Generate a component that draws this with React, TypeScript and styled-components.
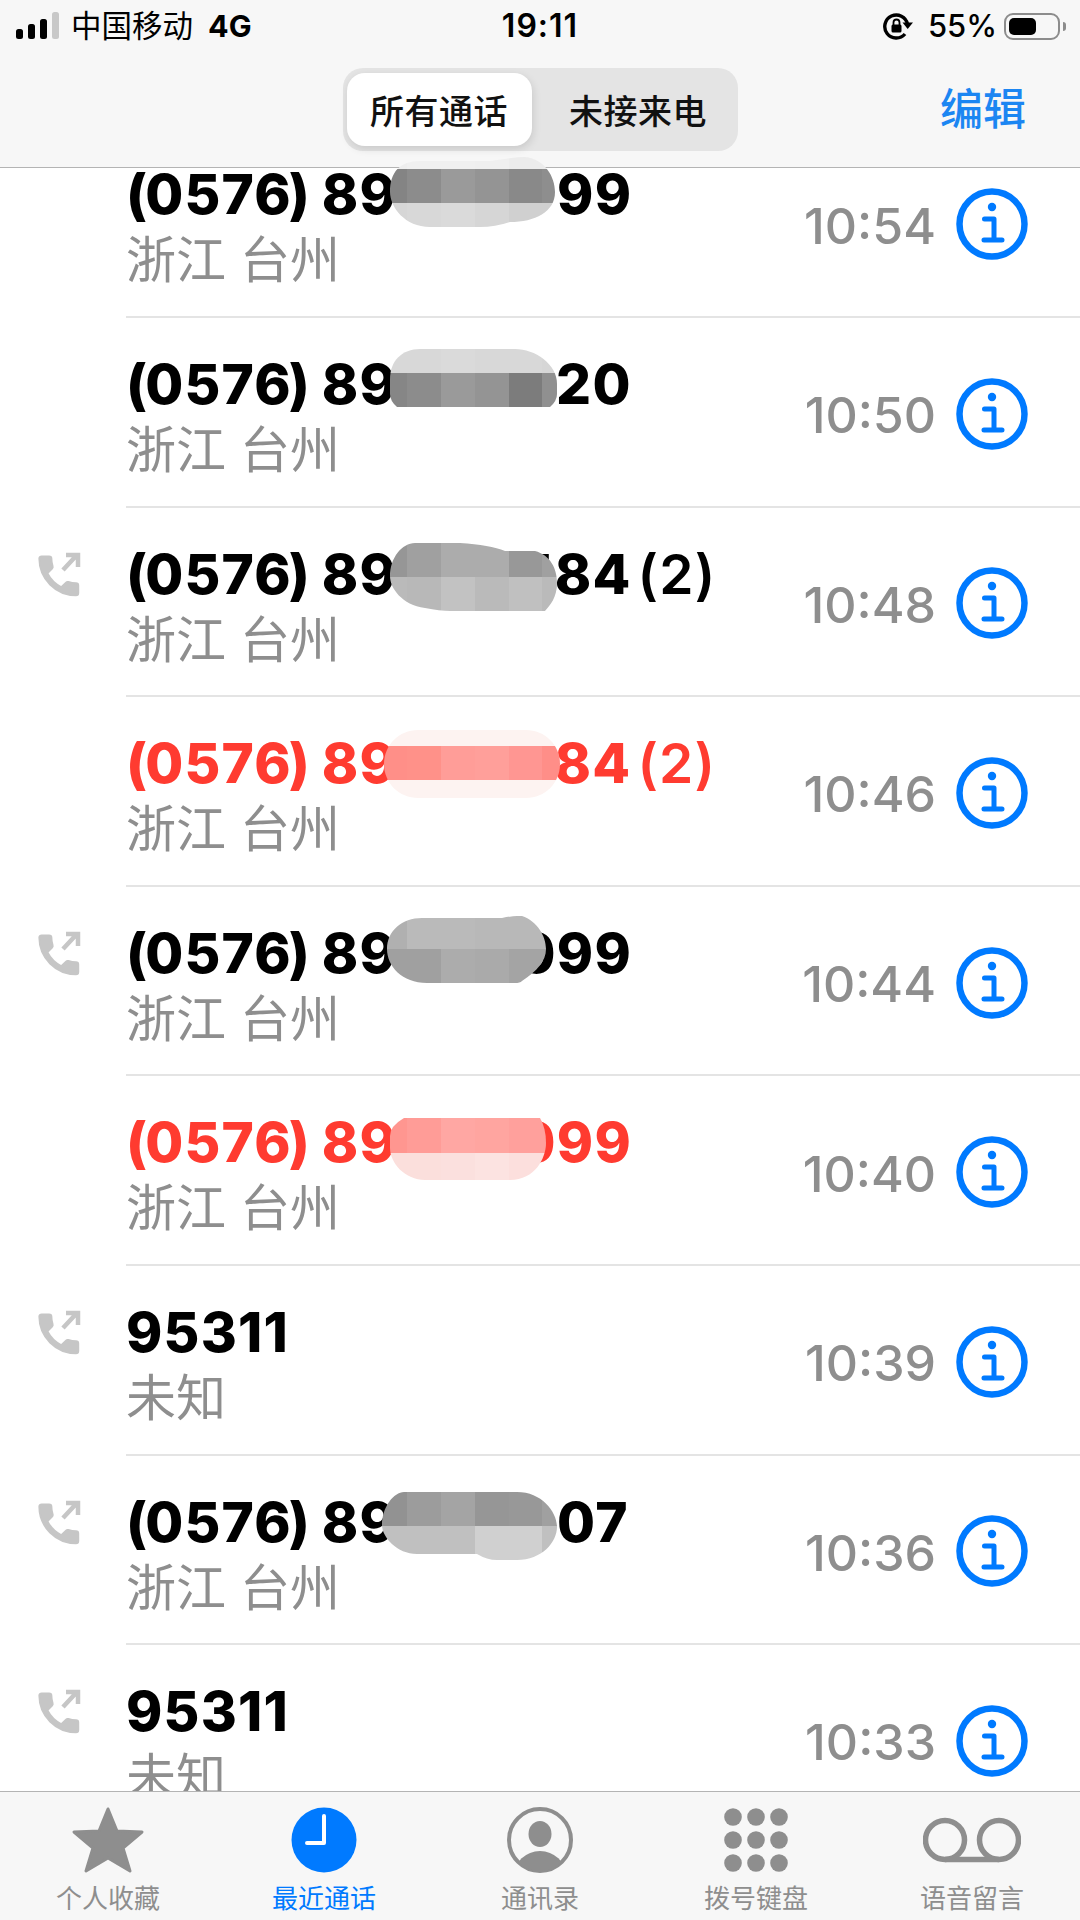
import { FC } from "react";
import styled, { createGlobalStyle } from "styled-components";

const ROW_HEIGHT = 189.6;
const FIRST_ROW_TOP = 128.4;
// column edges of the mosaic, in page pixels
const MOSAIC_EDGES = [370, 407, 441, 475, 509, 542, 580];

type Band = { y: number; h: number; colors: string[] };
type Mosaic = { x: number; y: number; w: number; h: number; d: string; bands: Band[] };
type Call = {
  area?: string;
  lead: string;
  gap?: number;
  tail?: string;
  count?: string;
  place: string;
  time: string;
  outgoing?: boolean;
  missed?: boolean;
  mosaic?: Mosaic;
};

const grey = (...values: number[]) => values.map((v) => `rgb(${v},${v},${v})`);

const calls: Call[] = [
  {
    area: "0576",
    lead: "89",
    gap: 160,
    tail: "99",
    place: "浙江 台州",
    time: "10:54",
    mosaic: {
      x: 390,
      y: 157,
      w: 165,
      h: 70,
      d: "M30 4H100Q125 0 135 0C155 2 165 20 165 35C165 55 145 65 120 65Q105 70 90 70H40C15 70 0 50 0 35C0 15 10 4 30 4Z",
      bands: [
        { y: 0, h: 12, colors: grey(238, 240, 240, 239, 236, 236) },
        { y: 12, h: 34, colors: grey(132, 140, 154, 148, 137, 142) },
        { y: 46, h: 24, colors: grey(214, 216, 218, 214, 208, 208) },
      ],
    },
  },
  {
    area: "0576",
    lead: "89",
    gap: 159,
    tail: "20",
    place: "浙江 台州",
    time: "10:50",
    mosaic: {
      x: 390,
      y: 349,
      w: 167,
      h: 58,
      d: "M30 0H125C145 0 167 15 167 35V45Q167 52 160 58H7Q0 52 0 45V30C0 12 12 0 30 0Z",
      bands: [
        { y: 0, h: 24, colors: grey(216, 216, 218, 216, 216, 214) },
        { y: 24, h: 34, colors: grey(134, 140, 154, 148, 124, 144) },
      ],
    },
  },
  {
    area: "0576",
    lead: "89",
    gap: 120.5,
    tail: "584",
    count: "(2)",
    place: "浙江 台州",
    time: "10:48",
    outgoing: true,
    mosaic: {
      x: 390,
      y: 543,
      w: 167,
      h: 68,
      d: "M25 0H70Q100 2 115 8H145C160 12 167 25 167 40C167 55 160 62 155 68H60Q50 68 35 65C12 62 0 45 0 33C0 15 12 0 25 0Z",
      bands: [
        { y: 0, h: 34, colors: grey(150, 160, 172, 172, 152, 160) },
        { y: 34, h: 34, colors: grey(186, 184, 194, 186, 192, 186) },
      ],
    },
  },
  {
    area: "0576",
    lead: "89",
    gap: 157.5,
    tail: "84",
    count: "(2)",
    place: "浙江 台州",
    time: "10:46",
    missed: true,
    mosaic: {
      x: 384,
      y: 730,
      w: 176,
      h: 68,
      d: "M34 0H142C161 0 176 15 176 34C176 53 161 68 142 68H34C15 68 0 53 0 34C0 15 15 0 34 0Z",
      bands: [
        { y: 0, h: 16, colors: Array(6).fill("#fdf3f1") },
        { y: 16, h: 34, colors: ["#ff8f88", "#ff9189", "#ff9d98", "#ff9f9a", "#ff9692", "#ff8e88"] },
        { y: 50, h: 18, colors: Array(6).fill("#fdf3f1") },
      ],
    },
  },
  {
    area: "0576",
    lead: "89",
    gap: 120.5,
    tail: "099",
    place: "浙江 台州",
    time: "10:44",
    outgoing: true,
    mosaic: {
      x: 387,
      y: 916,
      w: 159,
      h: 67,
      d: "M35 2H115Q125 0 130 0H135C150 5 159 20 159 33C159 45 150 55 135 65Q133 67 128 67H40C15 67 0 50 0 33C0 15 15 2 35 2Z",
      bands: [
        { y: 0, h: 33, colors: grey(176, 186, 186, 184, 184, 184) },
        { y: 33, h: 34, colors: grey(160, 160, 172, 170, 164, 164) },
      ],
    },
  },
  {
    area: "0576",
    lead: "89",
    gap: 120.5,
    tail: "099",
    place: "浙江 台州",
    time: "10:40",
    missed: true,
    mosaic: {
      x: 390,
      y: 1118,
      w: 156,
      h: 62,
      d: "M14 0H150Q156 10 156 25C156 40 145 62 120 62H35C15 62 0 45 0 30V18Q0 8 14 0Z",
      bands: [
        { y: 0, h: 35, colors: ["#ff9690", "#ff9c97", "#ffa7a3", "#ffa5a0", "#ffa09c", "#ffa09c"] },
        { y: 35, h: 27, colors: ["#fbdfdc", "#fbdfdc", "#fbe0de", "#fce3e1", "#fcdfdd", "#fcdfdd"] },
      ],
    },
  },
  { lead: "95311", place: "未知", time: "10:39", outgoing: true },
  {
    area: "0576",
    lead: "89",
    gap: 160,
    tail: "07",
    place: "浙江 台州",
    time: "10:36",
    outgoing: true,
    mosaic: {
      x: 382,
      y: 1492,
      w: 175,
      h: 68,
      d: "M22 0H135C160 0 175 20 175 35C175 50 160 68 135 68H115Q105 68 95 62H35C15 62 0 45 0 33C0 15 12 0 22 0Z",
      bands: [
        { y: 0, h: 34, colors: grey(146, 156, 164, 150, 152, 160) },
        { y: 34, h: 34, colors: grey(192, 192, 192, 208, 208, 192) },
      ],
    },
  },
  { lead: "95311", place: "未知", time: "10:33", outgoing: true },
];

const GlobalStyle = createGlobalStyle`
  html, body {
    margin: 0;
    padding: 0;
    background: #ffffff;
  }
`;

const Page = styled.div`
  display: flex;
  flex-direction: column;
  height: 1920px;
  width: 1080px;
  overflow: hidden;
  background: #ffffff;
  font-family: Inter, "Noto Sans CJK SC", sans-serif;
`;

const Header = styled.header`
  position: relative;
  z-index: 2;
  flex: none;
  height: 168px;
  box-sizing: border-box;
  background: #f7f7f7;
  border-bottom: 1px solid #b4b4b4;
`;

const StatusBar = styled.div`
  display: grid;
  grid-template-columns: 1fr auto 1fr;
  align-items: center;
  height: 52px;
  color: #000000;
`;

const StatusLeft = styled.div`
  display: flex;
  align-items: center;
  padding-left: 16px;
`;

const StatusRight = styled.div`
  display: flex;
  align-items: center;
  justify-content: flex-end;
  padding-right: 20px;
`;

const Signal = styled.div`
  display: flex;
  align-items: flex-end;
  gap: 5px;
  height: 28px;
  margin-top: -2px;
`;

const SignalBar = styled.span<{ $h: number; $off?: boolean }>`
  width: 7px;
  height: ${(p) => p.$h}px;
  border-radius: 2.5px;
  background: ${(p) => (p.$off ? "#c8c8c8" : "#000000")};
`;

const Carrier = styled.span`
  margin-left: 12px;
  font-size: 30.5px;
  line-height: 40px;
  font-weight: 400;
`;

const Network = styled.span`
  margin-left: 15px;
  font-size: 30.5px;
  line-height: 40px;
  font-weight: 700;
`;

const Clock = styled.span`
  font-size: 32px;
  line-height: 40px;
  font-weight: 600;
  letter-spacing: 1px;
`;

const Percent = styled.span`
  margin: 0 7px 0 15px;
  font-size: 31px;
  line-height: 40px;
  font-weight: 500;
`;

const Battery = styled.div`
  position: relative;
  width: 56px;
  height: 27px;
  box-sizing: border-box;
  padding: 3px;
  border: 2px solid #8c8c8c;
  border-radius: 9px;

  &::after {
    content: "";
    position: absolute;
    top: 7px;
    right: -8px;
    width: 3px;
    height: 9px;
    border-radius: 0 3px 3px 0;
    background: #8c8c8c;
  }
`;

const BatteryLevel = styled.div`
  width: 27px;
  height: 100%;
  border-radius: 5px;
  background: #000000;
`;

const NavBar = styled.nav`
  display: grid;
  grid-template-columns: 1fr auto 1fr;
  align-items: center;
  height: 114px;
`;

const Segments = styled.div`
  grid-column: 2;
  display: flex;
  align-items: center;
  width: 395px;
  height: 83px;
  box-sizing: border-box;
  padding: 0 5px 0 4px;
  background: #e4e4e4;
  border-radius: 20px;
`;

const Segment = styled.button<{ $active?: boolean }>`
  flex: ${(p) => (p.$active ? "0 0 185px" : "1")};
  height: 73px;
  padding: ${(p) => (p.$active ? "0" : "0 0 0 12px")};
  border: 0;
  border-radius: 18px;
  background: ${(p) => (p.$active ? "#ffffff" : "transparent")};
  box-shadow: ${(p) => (p.$active ? "1px 3px 8px rgba(0, 0, 0, 0.12)" : "none")};
  color: #111111;
  font-family: inherit;
  font-size: 34px;
  font-weight: 500;
  letter-spacing: 0.5px;
`;

const EditButton = styled.a`
  justify-self: end;
  padding-right: 54px;
  color: #1c86f2;
  font-size: 43px;
  font-weight: 500;
  line-height: 50px;
`;

const CallList = styled.main`
  flex: 1;
  min-height: 0;
  margin-top: -39.6px;
`;

const Row = styled.div`
  position: relative;
  display: flex;
  height: ${ROW_HEIGHT}px;
`;

const CallSlot = styled.div`
  flex: none;
  width: 126px;
  box-sizing: border-box;
  padding: 44px 0 0 37px;
`;

const RowBody = styled.div`
  flex: 1;
  display: flex;
  align-items: center;
  box-sizing: border-box;
  padding: 4px 52px 0 0;
  border-bottom: 2px solid #e4e4e4;
`;

const RowText = styled.div`
  flex: 1;
  align-self: flex-start;
  padding-top: 28px;
`;

const NumberLine = styled.div<{ $missed?: boolean }>`
  color: ${(p) => (p.$missed ? "#ff3b30" : "#000000")};
  font-size: 55px;
  font-weight: 800;
  letter-spacing: 1.2px;
  word-spacing: -2.5px;
  line-height: 69px;
  white-space: nowrap;
`;

const OpenParen = styled.span`
  margin-right: -3px;
`;

const CloseParen = styled.span`
  margin-left: -3px;
`;

const HiddenDigits = styled.span<{ $w: number }>`
  display: inline-block;
  width: ${(p) => p.$w}px;
`;

const Count = styled.span`
  margin-left: 6px;
  font-weight: 600;
`;

const Place = styled.div`
  color: #8e8e8e;
  font-size: 50px;
  font-weight: 400;
  line-height: 62px;
`;

const Time = styled.span`
  color: #8e8e8e;
  font-size: 50px;
  font-weight: 500;
  line-height: 60px;
  margin: 3px 20px 0 0;
`;

const MosaicShape = styled.svg<{ $left: number; $top: number }>`
  position: absolute;
  z-index: 3;
  left: ${(p) => p.$left}px;
  top: ${(p) => p.$top}px;
`;

const TabBar = styled.footer`
  position: relative;
  z-index: 2;
  flex: none;
  display: grid;
  grid-template-columns: repeat(5, 1fr);
  height: 129px;
  box-sizing: border-box;
  padding-top: 13px;
  background: #f7f7f7;
  border-top: 1px solid #b4b4b4;
`;

const Tab = styled.div<{ $active?: boolean }>`
  display: flex;
  flex-direction: column;
  align-items: center;
  color: ${(p) => (p.$active ? "#007aff" : "#8e8e8e")};
`;

const TabIcon = styled.div`
  display: flex;
  align-items: center;
  justify-content: center;
  height: 70px;
`;

const TabLabel = styled.span`
  margin-top: 9px;
  font-size: 26px;
  line-height: 30px;
`;

const OutgoingIcon: FC = () => (
  <svg width="45" height="45" viewBox="0 0 45 45">
    <g transform="translate(-4 -2) scale(2.15)" fill="#c6c6c6" stroke="#c6c6c6" strokeLinejoin="round" strokeWidth="1">
      <path d="M6.62 10.79c1.44 2.83 3.76 5.14 6.59 6.59l2.2-2.2c.27-.27.67-.36 1.02-.24 1.12.37 2.33.57 3.57.57.55 0 1 .45 1 1V20c0 .55-.45 1-1 1-9.39 0-17-7.61-17-17 0-.55.45-1 1-1h3.5c.55 0 1 .45 1 1 0 1.25.2 2.45.57 3.57.11.35.03.74-.25 1.02l-2.2 2.2z" />
    </g>
    <path d="M26 18L39 4M29 3H41V15" fill="none" stroke="#c6c6c6" strokeWidth="4.5" />
  </svg>
);

const InfoIcon: FC = () => (
  <svg width="72" height="72" viewBox="-36 -36 72 72">
    <circle r="32.5" fill="none" stroke="#007aff" strokeWidth="6.5" />
    <circle cy="-17" r="4.2" fill="#007aff" />
    <path
      d="M-7.5 -5H2V16M-8 16H10"
      fill="none"
      stroke="#007aff"
      strokeLinecap="round"
      strokeLinejoin="round"
      strokeWidth="5"
    />
  </svg>
);

const RotationLockIcon: FC = () => (
  <svg width="30" height="28" viewBox="0 0 30 28">
    <path
      d="M22 22A11.5 11.5 0 1 1 24.5 12"
      fill="none"
      stroke="#000000"
      strokeWidth="3.4"
    />
    <path d="M19.5 10.5H30L24.7 17Z" fill="#000000" />
    <rect x="8.5" y="12.5" width="10" height="8" rx="1.5" fill="#000000" />
    <path d="M10.5 13V10.5a3 3 0 0 1 6 0V13" fill="none" stroke="#000000" strokeWidth="1.8" />
  </svg>
);

const StarIcon: FC = () => (
  <svg width="74" height="68" viewBox="0 0 74 68">
    <path
      d="M37 3L46 25L71 26L52 42L59 65L37 52L15 65L22 42L3 26L28 25Z"
      fill="currentColor"
      stroke="currentColor"
      strokeLinejoin="round"
      strokeWidth="3"
    />
  </svg>
);

const RecentsIcon: FC = () => (
  <svg width="66" height="66" viewBox="-33 -33 66 66">
    <circle r="32.5" fill="currentColor" />
    <path d="M0 -24V3H-17" fill="none" stroke="#ffffff" strokeLinecap="round" strokeLinejoin="round" strokeWidth="4" />
  </svg>
);

const ContactIcon: FC = () => (
  <svg width="66" height="66" viewBox="-33 -33 66 66">
    <defs>
      <clipPath id="contact-ring">
        <circle r="31" />
      </clipPath>
    </defs>
    <circle r="31" fill="none" stroke="currentColor" strokeWidth="4" />
    <ellipse cy="-6" rx="11.5" ry="13" fill="currentColor" />
    <ellipse cy="36" rx="26" ry="25" fill="currentColor" clipPath="url(#contact-ring)" />
  </svg>
);

const KeypadIcon: FC = () => (
  <svg width="66" height="66" viewBox="-33 -33 66 66">
    {[-23, 0, 23].map((cy) =>
      [-23, 0, 23].map((cx) => (
        <circle key={`${cx}-${cy}`} cx={cx} cy={cy} r="8.8" fill="currentColor" />
      )),
    )}
  </svg>
);

const VoicemailIcon: FC = () => (
  <svg width="98" height="46" viewBox="0 0 98 46">
    <circle cx="22" cy="23" r="19.5" fill="none" stroke="currentColor" strokeWidth="5.5" />
    <circle cx="76" cy="23" r="19.5" fill="none" stroke="currentColor" strokeWidth="5.5" />
    <path d="M22 42.5H76" stroke="currentColor" strokeWidth="5.5" />
  </svg>
);

const MosaicPatch: FC<{ mosaic: Mosaic; index: number }> = ({ mosaic, index }) => (
  <MosaicShape
    $left={mosaic.x}
    $top={mosaic.y - (FIRST_ROW_TOP + ROW_HEIGHT * index)}
    width={mosaic.w}
    height={mosaic.h}
    viewBox={`0 0 ${mosaic.w} ${mosaic.h}`}
  >
    <defs>
      <clipPath id={`mosaic-${index}`}>
        <path d={mosaic.d} />
      </clipPath>
    </defs>
    <g clipPath={`url(#mosaic-${index})`}>
      {mosaic.bands.map((band) =>
        band.colors.map((color, col) => (
          <rect
            key={`${band.y}-${col}`}
            x={MOSAIC_EDGES[col] - mosaic.x}
            y={band.y}
            width={MOSAIC_EDGES[col + 1] - MOSAIC_EDGES[col]}
            height={band.h}
            fill={color}
          />
        )),
      )}
    </g>
  </MosaicShape>
);

const App: FC = () => {
  return (
    <Page>
      <GlobalStyle />
      <Header>
        <StatusBar>
          <StatusLeft>
            <Signal>
              <SignalBar $h={10} />
              <SignalBar $h={15} />
              <SignalBar $h={20} />
              <SignalBar $h={27} $off />
            </Signal>
            <Carrier>中国移动</Carrier>
            <Network>4G</Network>
          </StatusLeft>
          <Clock>19:11</Clock>
          <StatusRight>
            <RotationLockIcon />
            <Percent>55%</Percent>
            <Battery>
              <BatteryLevel />
            </Battery>
          </StatusRight>
        </StatusBar>
        <NavBar>
          <Segments>
            <Segment $active>所有通话</Segment>
            <Segment>未接来电</Segment>
          </Segments>
          <EditButton>编辑</EditButton>
        </NavBar>
      </Header>

      <CallList>
        {calls.map((call, index) => (
          <Row key={index}>
            <CallSlot>{call.outgoing && <OutgoingIcon />}</CallSlot>
            <RowBody>
              <RowText>
                <NumberLine $missed={call.missed}>
                  {call.area && (
                    <>
                      <OpenParen>(</OpenParen>
                      {call.area}
                      <CloseParen>)</CloseParen>{" "}
                    </>
                  )}
                  {call.lead}
                  {call.gap && <HiddenDigits $w={call.gap} />}
                  {call.tail}
                  {call.count && <Count>{call.count}</Count>}
                </NumberLine>
                <Place>{call.place}</Place>
              </RowText>
              <Time>{call.time}</Time>
              <InfoIcon />
            </RowBody>
            {call.mosaic && <MosaicPatch mosaic={call.mosaic} index={index} />}
          </Row>
        ))}
      </CallList>

      <TabBar>
        <Tab>
          <TabIcon>
            <StarIcon />
          </TabIcon>
          <TabLabel>个人收藏</TabLabel>
        </Tab>
        <Tab $active>
          <TabIcon>
            <RecentsIcon />
          </TabIcon>
          <TabLabel>最近通话</TabLabel>
        </Tab>
        <Tab>
          <TabIcon>
            <ContactIcon />
          </TabIcon>
          <TabLabel>通讯录</TabLabel>
        </Tab>
        <Tab>
          <TabIcon>
            <KeypadIcon />
          </TabIcon>
          <TabLabel>拨号键盘</TabLabel>
        </Tab>
        <Tab>
          <TabIcon>
            <VoicemailIcon />
          </TabIcon>
          <TabLabel>语音留言</TabLabel>
        </Tab>
      </TabBar>
    </Page>
  );
};

export default App;
